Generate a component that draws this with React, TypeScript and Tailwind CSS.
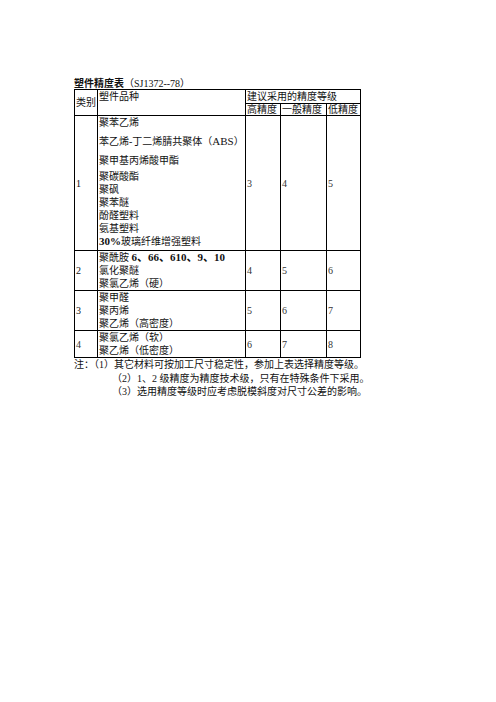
const rowOne = [
  { text: '聚苯乙烯', gap: '' },
  { text: null, gap: 'mt-[6px]' },
  { text: '聚甲基丙烯酸甲酯', gap: 'mt-[6px]' },
  { text: '聚碳酸酯', gap: 'mt-[3px]' },
  { text: '聚砜', gap: '' },
  { text: '聚苯醚', gap: '' },
  { text: '酚醛塑料', gap: '' },
  { text: '氨基塑料', gap: '' },
];

function Grade({ value }: { value: string }) {
  return <div className="flex items-center bg-white pl-px text-[#333]">{value}</div>;
}

export default function App() {
  return (
    <div className="min-h-screen bg-white pt-[76px] pl-[74px] text-[10px] text-[#111] font-['Liberation_Serif','Noto_Sans_CJK_SC',serif]">
      <h1 className="h-[13px] leading-[13px] whitespace-nowrap">
        <span className="font-bold font-['Noto_Sans_CJK_SC',sans-serif]">塑件精度表</span>（SJ1372--78）
      </h1>

      <div className="grid w-[287px] grid-cols-[22px_147px_34px_45px_33px] grid-rows-[13px_11px_134px_39px_39px_26px] gap-px bg-black p-px leading-[13px] whitespace-nowrap">
        {/* header */}
        <div className="row-span-2 flex items-center bg-white pl-px">类别</div>
        <div className="row-span-2 bg-white pl-px">塑件品种</div>
        <div className="col-span-3 bg-white pl-px">建议采用的精度等级</div>
        <div className="bg-white pl-px leading-[11px]">高精度</div>
        <div className="bg-white pl-px leading-[11px]">一般精度</div>
        <div className="bg-white pl-px leading-[11px]">低精度</div>

        {/* 1 */}
        <div className="flex items-center bg-white pl-px">1</div>
        <div className="bg-white pl-px">
          {rowOne.map((line, i) => (
            <div key={i} className={`h-[13px] ${line.gap}`}>
              {line.text ?? (
                <>
                  苯乙烯-丁二烯腈共聚体（<span className="text-[11px]">ABS</span>）
                </>
              )}
            </div>
          ))}
          <div className="h-[13px]">
            <span className="text-[11px] font-bold">30%</span>玻璃纤维增强塑料
          </div>
        </div>
        <Grade value="3" />
        <Grade value="4" />
        <Grade value="5" />

        {/* 2 */}
        <div className="flex items-center bg-white pl-px">2</div>
        <div className="bg-white pl-px">
          <div className="h-[13px]">
            聚酰胺 <span className="text-[11px] font-bold">6、66、610、9、10</span>
          </div>
          <div className="h-[13px]">氯化聚醚</div>
          <div className="h-[13px]">聚氯乙烯（硬）</div>
        </div>
        <Grade value="4" />
        <Grade value="5" />
        <Grade value="6" />

        {/* 3 */}
        <div className="flex items-center bg-white pl-px">3</div>
        <div className="bg-white pl-px">
          <div className="h-[13px]">聚甲醛</div>
          <div className="h-[13px]">聚丙烯</div>
          <div className="h-[13px]">聚乙烯（高密度）</div>
        </div>
        <Grade value="5" />
        <Grade value="6" />
        <Grade value="7" />

        {/* 4 */}
        <div className="flex items-center bg-white pl-px text-[#333]">4</div>
        <div className="bg-white pl-px">
          <div className="h-[13px]">聚氯乙烯（软）</div>
          <div className="h-[13px]">聚乙烯（低密度）</div>
        </div>
        <Grade value="6" />
        <Grade value="7" />
        <Grade value="8" />
      </div>

      <div className="leading-[13.5px] whitespace-nowrap">
        <div>注：（1）其它材料可按加工尺寸稳定性，参加上表选择精度等级。</div>
        <div className="pl-[38px]">（2）1、2 级精度为精度技术级，只有在特殊条件下采用。</div>
        <div className="pl-[38px]">（3）选用精度等级时应考虑脱模斜度对尺寸公差的影响。</div>
      </div>
    </div>
  );
}
